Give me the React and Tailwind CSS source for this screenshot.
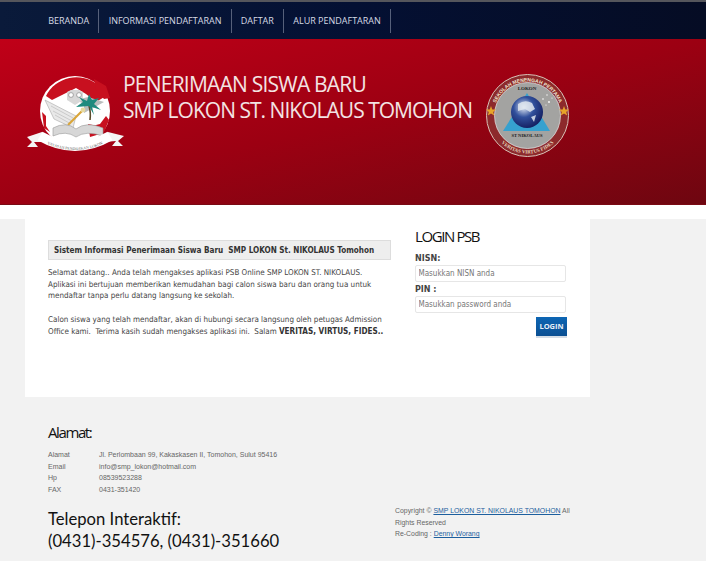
import React from 'react';

const navItems = ['BERANDA', 'INFORMASI PENDAFTARAN', 'DAFTAR', 'ALUR PENDAFTARAN'];

function YayasanLogo() {
  return (
    <svg viewBox="0 0 100 82" className="w-[100px] h-[82px] shrink-0">
      <defs>
        <path id="ribbonText" d="M15 67 Q49 85 83 67" />
      </defs>
      <circle cx="49" cy="37" r="35" fill="#fff" />
      <path d="M20 22 A34 34 0 0 1 72 11 L80 22 L70 28 L60 20 L50 14 L38 20 L26 26 Z" fill="#c8101f" />
      <path d="M68 5 L80 12 L84 24 L78 25 L70 16 Z M80 42 L83 46 L78 58 L70 60 L66 52 L74 50 Z M62 50 L72 52 L74 60 L64 63 Z M16 38 L20 42 L20 52 L24 58 L18 54 Z M27 12 L30 16 L26 19 Z" fill="#c8101f" />
      <path d="M19 26 L50 42 L47 54 L28 45 Z" fill="#e8e8e8" stroke="#a8a8a8" strokeWidth="0.6" />
      <path d="M25 32 L47 44 M27 37 L46 47 M29 41 L45 50" stroke="#b5b5b5" strokeWidth="0.6" />
      <path d="M78 28 L58 39 L58 30 L50 26 L62 23 Z" fill="#b9bdbd" />
      <path d="M41 18 L45 16 L53 16 L57 18 L57 26 L49 31 L41 26 Z" fill="#d8d8d8" />
      <circle cx="45" cy="21" r="2.4" fill="#fff" stroke="#777" strokeWidth="0.6" />
      <circle cx="53" cy="21" r="2.4" fill="#fff" stroke="#777" strokeWidth="0.6" />
      <path d="M42 51 L56 37" stroke="#d9a53a" strokeWidth="2.2" />
      <circle cx="57" cy="36" r="2.4" fill="#e6d9a0" />
      <path d="M64 46 Q65 38 63 32" stroke="#5a4a2a" strokeWidth="1.6" fill="none" />
      <path d="M63 32 L50 33 L57 28 L53 23 L61 27 L63 20 L66 26 L73 24 L68 30 L75 36 L66 33 L68 41 Z" fill="#1f8a7e" />
      <path d="M27 54 Q40 47 50 55 Q60 47 77 54 L77 62 Q60 56 50 63 Q40 56 27 62 Z" fill="#d7d7d7" stroke="#999" strokeWidth="0.6" />
      <path d="M1 63 L16 58 L20 68 L8 68 L12 73 L1 73 L6 68 Z M98 62 L82 58 L78 68 L90 67 L86 72 L97 72 L92 67 Z" fill="#f4f4f4" />
      <path d="M14 62 Q49 82 84 62" stroke="#fff" strokeWidth="10" fill="none" />
      <text fontSize="3.9" fill="#666" fontFamily="Liberation Serif, serif">
        <textPath href="#ribbonText" startOffset="50%" textAnchor="middle">YAYASAN PENDIDIKAN LOKON</textPath>
      </text>
    </svg>
  );
}

function SekolahLogo() {
  return (
    <svg viewBox="0 0 84 84" className="w-[84px] h-[84px] shrink-0">
      <defs>
        <path id="arcTop" d="M7.5 41.5 A34 34 0 0 1 75.5 41.5" />
        <path id="arcBottom" d="M3.5 41.5 A38 38 0 0 0 79.5 41.5" />
        <radialGradient id="globe" cx="40%" cy="35%" r="70%">
          <stop offset="0%" stopColor="#e8eef6" />
          <stop offset="45%" stopColor="#31509c" />
          <stop offset="100%" stopColor="#121b5c" />
        </radialGradient>
      </defs>
      <circle cx="41.5" cy="41.5" r="41" fill="#8d2a2c" stroke="#d9c3b8" strokeWidth="1" />
      <circle cx="41.5" cy="41.5" r="33" fill="#a3a3a1" stroke="#e6e6e6" strokeWidth="0.7" />
      <text fontSize="5" fill="#f0e6d0" fontFamily="Liberation Sans, sans-serif" fontWeight="700">
        <textPath href="#arcTop" startOffset="50%" textAnchor="middle">SEKOLAH MENENGAH PERTAMA</textPath>
      </text>
      <text fontSize="5" fill="#e8dcc0" fontFamily="Liberation Serif, serif" fontWeight="700">
        <textPath href="#arcBottom" startOffset="50%" textAnchor="middle">VERITAS VIRTUS FIDES</textPath>
      </text>
      <text x="41" y="16" textAnchor="middle" fontSize="5" fontWeight="700" fill="#1d1d1d" fontFamily="Liberation Serif, serif">LOKON</text>
      <path d="M41 19 L64 57 L17 57 Z" fill="#36a1cf" />
      <circle cx="41" cy="38" r="16" fill="url(#globe)" />
      <path d="M32 30 Q39 25 46 29 L49 35 L44 38 L39 35 L32 37 Z M45 43 L50 41 L48 48 Z" fill="#dfe6ef" opacity="0.85" />
      <text x="41" y="63" textAnchor="middle" fontSize="4.6" fontWeight="700" fill="#1d1d1d" fontFamily="Liberation Serif, serif">ST NIKOLAUS</text>
      <path d="M5 30 L6.3 33.4 L10 33.6 L7.2 36 L8.2 39.6 L5 37.6 L1.8 39.6 L2.8 36 L0 33.6 L3.7 33.4 Z" transform="translate(0 2)" fill="#e7a52a" />
      <path d="M78 30 L79.3 33.4 L83 33.6 L80.2 36 L81.2 39.6 L78 37.6 L74.8 39.6 L75.8 36 L73 33.6 L76.7 33.4 Z" transform="translate(0 2)" fill="#e7a52a" />
      <g fill="#fff">
        <circle cx="57" cy="25" r="0.8" /><circle cx="61" cy="21" r="0.7" /><circle cx="63" cy="28" r="0.9" /><circle cx="66" cy="24" r="0.6" /><circle cx="60" cy="31" r="0.6" />
      </g>
    </svg>
  );
}

export default function App() {
  return (
    <div className="w-[706px] h-[561px] overflow-hidden bg-[#f2f2f2] font-['Liberation_Sans',sans-serif]">
      <header>
        <div className="h-[2px] bg-[#55565c]" />
        <nav className="h-[37px] flex items-center pl-[39px] bg-gradient-to-r from-[#0a1a3a] via-[#041033] to-[#050c24]">
          {navItems.map((item) => (
            <div key={item} className="h-[24px] flex items-center px-[9.2px] border-r border-[#56607a] font-['Open_Sans',sans-serif] text-[9px] text-[#d6dae4]">
              {item}
            </div>
          ))}
        </nav>
        <div className="h-[166px] flex items-start bg-gradient-to-br from-[#c00018] via-[#9c0012] to-[#6e0610] border-b border-[#7a0a14]">
          <div className="mt-[35px] ml-[26px]"><YayasanLogo /></div>
          <h1 className="mt-[32px] ml-[-3px] font-['Open_Sans',sans-serif] font-normal text-[21px] leading-[26px] tracking-[-0.98px] text-[#f3e3e3] whitespace-nowrap">
            <span className="tracking-[-0.78px]">PENERIMAAN SISWA BARU</span><br />SMP LOKON ST. NIKOLAUS TOMOHON
          </h1>
          <div className="mt-[35px] ml-[14px]"><SekolahLogo /></div>
        </div>
      </header>

      <div className="h-[14px] bg-white" />

      <main className="w-[565px] h-[178px] ml-[25px] bg-white flex">
        <section className="w-[343px] ml-[23px] pt-[21px]">
          <h2 className="h-[20px] flex items-center pl-[5px] bg-[#eeeeee] border border-[#dddddd] font-['DejaVu_Sans_Condensed','DejaVu_Sans',sans-serif] font-bold text-[8.1px] text-[#333] whitespace-pre">
            Sistem Informasi Penerimaan Siswa Baru  SMP LOKON St. NIKOLAUS Tomohon
          </h2>
          <div className="mt-[7px] font-['DejaVu_Sans_Condensed','DejaVu_Sans',sans-serif] text-[7.97px] leading-[11.7px] text-[#444] whitespace-pre">
            <p>Selamat datang.. Anda telah mengakses aplikasi PSB Online SMP LOKON ST. NIKOLAUS.</p>
            <p>Aplikasi ini bertujuan memberikan kemudahan bagi calon siswa baru dan orang tua untuk</p>
            <p>mendaftar tanpa perlu datang langsung ke sekolah.</p>
            <p className="mt-[11.7px]">Calon siswa yang telah mendaftar, akan di hubungi secara langsung oleh petugas Admission</p>
            <p>Office kami.  Terima kasih sudah mengakses aplikasi ini.  Salam <b className="text-[8.15px] text-[#333]">VERITAS, VIRTUS, FIDES..</b></p>
          </div>
        </section>

        <aside className="w-[151px] ml-[24px] pt-[7px]">
          <h2 className="font-['Open_Sans',sans-serif] font-normal text-[15px] leading-[20px] tracking-[-1.4px] text-[#111]">LOGIN PSB</h2>
          <form className="mt-[8px]">
            <label className="block font-['DejaVu_Sans',sans-serif] font-bold text-[8px] leading-[10px] text-[#444]">NISN:</label>
            <input readOnly placeholder="Masukkan NISN anda" className="block w-full h-[17px] mt-[1px] px-[2.5px] bg-white border border-[#e6e6e6] rounded-[2px] font-['DejaVu_Sans_Condensed','DejaVu_Sans',sans-serif] text-[8px] placeholder:text-[#777] outline-none" />
            <label className="block mt-[3px] font-['DejaVu_Sans',sans-serif] font-bold text-[8px] leading-[10px] text-[#444]">PIN :</label>
            <input readOnly placeholder="Masukkan password anda" className="block w-full h-[17px] mt-[1px] px-[2.5px] bg-white border border-[#e6e6e6] rounded-[2px] font-['DejaVu_Sans_Condensed','DejaVu_Sans',sans-serif] text-[8px] placeholder:text-[#777] outline-none" />
            <div className="flex justify-end mt-[4px] mr-[-1px]">
              <button type="button" className="w-[31px] h-[21px] bg-gradient-to-b from-[#0d66b4] to-[#0b4f92] border-b-[2px] border-[#d5dde6] font-['Open_Sans',sans-serif] font-bold text-[7.5px] text-[#e6f0f8]">
                LOGIN
              </button>
            </div>
          </form>
        </aside>
      </main>

      <footer className="flex pl-[48px] pt-[25px]">
        <div className="w-[347px]">
          <h3 className="font-['Open_Sans',sans-serif] font-normal text-[15px] leading-[20px] tracking-[-1.4px] text-[#111]">Alamat:</h3>
          <dl className="mt-[7px] grid grid-cols-[51px_1fr] text-[7px] leading-[11.7px] text-[#666]">
            <dt>Alamat</dt><dd>Jl. Perlombaan 99, Kakaskasen II, Tomohon, Sulut 95416</dd>
            <dt>Email</dt><dd>info@smp_lokon@hotmail.com</dd>
            <dt>Hp</dt><dd>08539523288</dd>
            <dt>FAX</dt><dd>0431-351420</dd>
          </dl>
          <p className="mt-[13.5px] font-['Lato',sans-serif] text-[16.65px] leading-[21.5px] text-[#111] whitespace-nowrap">
            Telepon Interaktif:<br />(0431)-354576, (0431)-351660
          </p>
        </div>
        <div className="w-[180px] pt-[83px] text-[6.9px] leading-[11.7px] text-[#666]">
          <p>Copyright © <a className="text-[#1d5f9e] underline">SMP LOKON ST. NIKOLAUS TOMOHON</a> All</p>
          <p>Rights Reserved</p>
          <p>Re-Coding : <a className="text-[#1d5f9e] underline">Denny Worang</a></p>
        </div>
      </footer>
    </div>
  );
}
